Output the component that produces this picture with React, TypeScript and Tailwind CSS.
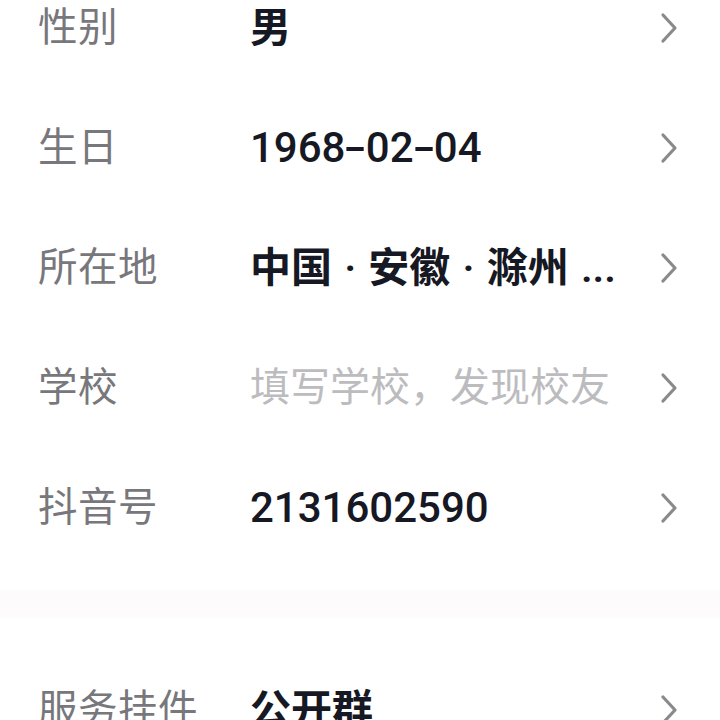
import React from "react";

const Chevron = () => (
  <svg width="18" height="32" viewBox="0 0 18 32" fill="none" className="shrink-0">
    <path d="M3 3 L15 16 L3 29" stroke="#8a8a8e" strokeWidth="3.2" strokeLinecap="round" strokeLinejoin="round" />
  </svg>
);

type Row = { label: string; value: React.ReactNode; kind?: "placeholder" | "num" | "text" };

const Dash = () => <span className="mx-[3px] inline-block scale-x-[1.6]">-</span>;

const rows: Row[] = [
  { label: "性别", value: "男" },
  {
    label: "生日",
    value: (
      <>
        1968<Dash />02<Dash />04
      </>
    ),
    kind: "num",
  },
  { label: "所在地", value: "中国 · 安徽 · 滁州 ..." },
  { label: "学校", value: "填写学校，发现校友", kind: "placeholder" },
  { label: "抖音号", value: "2131602590", kind: "num" },
];

function RowItem({ r }: { r: Row }) {
  const cls =
    r.kind === "placeholder"
      ? "flex-1 text-[40px] leading-none text-[#bcbcbf] font-normal whitespace-nowrap"
      : r.kind === "num"
      ? "flex-1 text-[42px] leading-none text-[#161823] font-medium whitespace-nowrap"
      : "flex-1 text-[41px] leading-none text-[#161823] font-semibold whitespace-nowrap [word-spacing:2px]";
  return (
    <div className="flex h-[120px] items-center pl-[38px] pr-[42px]">
      <div className="w-[212px] shrink-0 text-[39.5px] leading-none text-[#77777c] tracking-[0.5px]">
        {r.label}
      </div>
      <div className={cls}>{r.value}</div>
      <Chevron />
    </div>
  );
}

export default function App() {
  return (
    <div
      className="h-[720px] w-[720px] overflow-hidden bg-white"
      style={{ fontFamily: "Roboto, 'Noto Sans CJK SC', sans-serif" }}
    >
      <div className="-mt-[32px]">
        {rows.map((r) => (
          <RowItem key={r.label} r={r} />
        ))}
        <div className="h-[22px]" />
        <div className="h-[28px] bg-[#fdfbfb]" />
        <div className="h-[32px]" />
        <RowItem r={{ label: "服务挂件", value: "公开群" }} />
      </div>
    </div>
  );
}
